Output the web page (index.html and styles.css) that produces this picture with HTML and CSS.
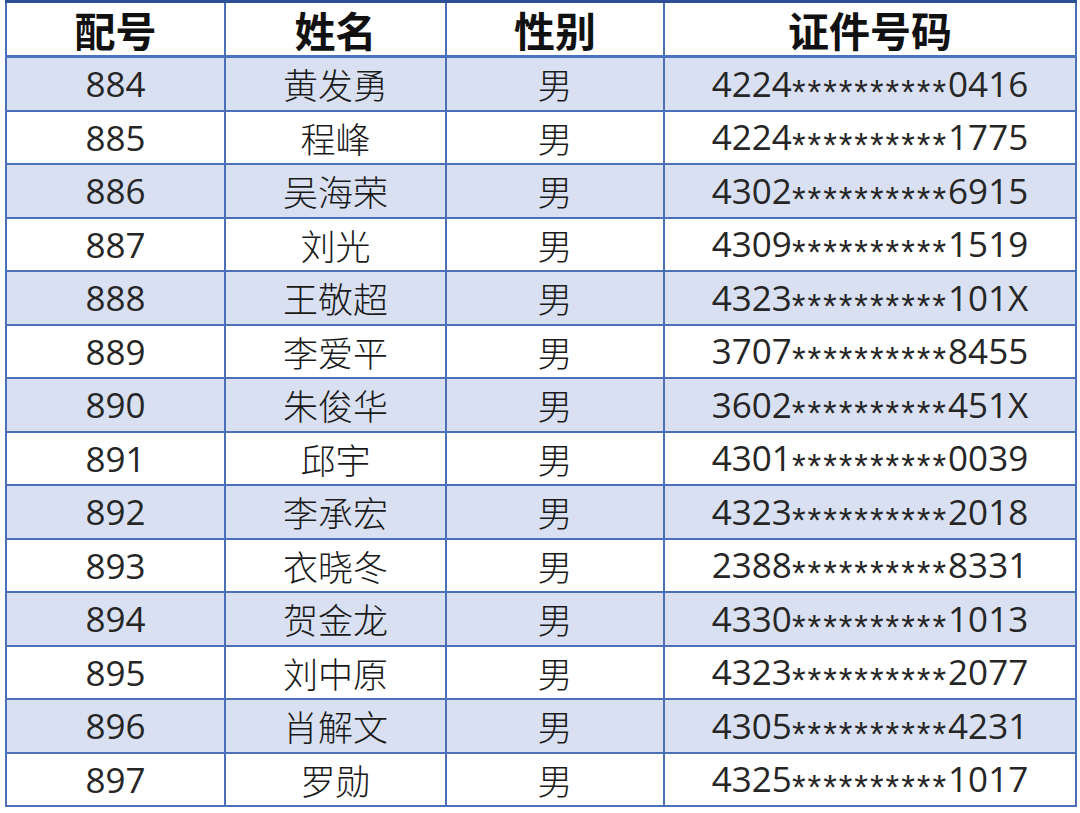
FILE: index.html
```html
<!DOCTYPE html>
<html lang="zh-CN">
<head>
<meta charset="utf-8">
<title>名单</title>
<link rel="stylesheet" href="styles.css">
</head>
<body>
<table class="roster">
  <colgroup>
    <col class="c1"><col class="c2"><col class="c3"><col class="c4">
  </colgroup>
  <thead>
    <tr><th>配号</th><th>姓名</th><th>性别</th><th>证件号码</th></tr>
  </thead>
  <tbody>
    <tr><td>884</td><td>黄发勇</td><td>男</td><td>4224<span class="mask">**********</span>0416</td></tr>
    <tr><td>885</td><td>程峰</td><td>男</td><td>4224<span class="mask">**********</span>1775</td></tr>
    <tr><td>886</td><td>吴海荣</td><td>男</td><td>4302<span class="mask">**********</span>6915</td></tr>
    <tr><td>887</td><td>刘光</td><td>男</td><td>4309<span class="mask">**********</span>1519</td></tr>
    <tr><td>888</td><td>王敬超</td><td>男</td><td>4323<span class="mask">**********</span>101X</td></tr>
    <tr><td>889</td><td>李爱平</td><td>男</td><td>3707<span class="mask">**********</span>8455</td></tr>
    <tr><td>890</td><td>朱俊华</td><td>男</td><td>3602<span class="mask">**********</span>451X</td></tr>
    <tr><td>891</td><td>邱宇</td><td>男</td><td>4301<span class="mask">**********</span>0039</td></tr>
    <tr><td>892</td><td>李承宏</td><td>男</td><td>4323<span class="mask">**********</span>2018</td></tr>
    <tr><td>893</td><td>衣晓冬</td><td>男</td><td>2388<span class="mask">**********</span>8331</td></tr>
    <tr><td>894</td><td>贺金龙</td><td>男</td><td>4330<span class="mask">**********</span>1013</td></tr>
    <tr><td>895</td><td>刘中原</td><td>男</td><td>4323<span class="mask">**********</span>2077</td></tr>
    <tr><td>896</td><td>肖解文</td><td>男</td><td>4305<span class="mask">**********</span>4231</td></tr>
    <tr><td>897</td><td>罗勋</td><td>男</td><td>4325<span class="mask">**********</span>1017</td></tr>
  </tbody>
</table>
</body>
</html>
```
FILE: styles.css
```css
html, body {
  margin: 0;
  padding: 0;
  background: #ffffff;
}
body {
  font-family: "Noto Sans CJK SC", "Noto Sans", sans-serif;
  color: #1e1e1e;
}
.roster {
  border-collapse: collapse;
  margin-left: 5px;
  width: 1070px;
  table-layout: fixed;
}
.c1 { width: 219px; }
.c2 { width: 221px; }
.c3 { width: 218px; }
.c4 { width: 412px; }
.roster th,
.roster td {
  border: 2px solid #4b6fb8;
  text-align: center;
  padding: 0;
  line-height: 1;
  vertical-align: middle;
}
.roster thead tr {
  border-top: 3px solid #2f4f95;
}
.roster th {
  height: 52px;
  font-size: 41px;
  font-weight: 700;
  color: #111111;
  border-bottom: 3px solid #4a72c0;
}
.roster td {
  height: 51.5px;
  font-family: "Open Sans", "Noto Sans CJK SC", sans-serif;
  font-size: 35px;
  font-weight: 400;
  color: #262626;
}
.roster td:nth-child(2),
.roster td:nth-child(3) {
  font-family: "Noto Sans CJK SC", sans-serif;
  font-weight: 300;
  color: #1a1a1a;
}
.roster tbody tr:nth-child(odd) td {
  background: #d9e0f2;
}
.roster tbody tr:nth-child(even) td {
  background: #ffffff;
}
.mask {
  font-family: "Liberation Sans", sans-serif;
  font-size: 35px;
  letter-spacing: 2px;
  position: relative;
  top: 7px;
}
```
